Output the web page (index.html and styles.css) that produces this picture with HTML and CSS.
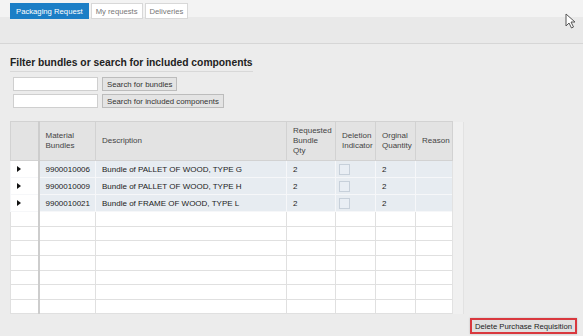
FILE: index.html
```html
<html>
<head>
    <link rel="stylesheet" href="styles.css">
</head>
<body>
    <div class="topbar">
        <div class="tabs">
            <span class="tab active">Packaging Request</span>
            <span class="tab">My requests</span>
            <span class="tab">Deliveries</span>
        </div>
    </div>
    <div class="band"></div>

    <div class="content">
        <h2><span>Filter bundles or search for included components</span></h2>

        <div class="search">
            <div class="search-row">
                <input type="text">
                <button>Search for bundles</button>
            </div>
            <div class="search-row">
                <input type="text">
                <button>Search for included components</button>
            </div>
        </div>

        <table class="grid">
            <colgroup>
                <col class="c-sel">
                <col class="c-mat">
                <col class="c-desc">
                <col class="c-qty">
                <col class="c-del">
                <col class="c-org">
                <col class="c-rsn">
                <col class="c-scroll">
            </colgroup>
            <tr class="head">
                <td class="sel"></td>
                <td>Material<br>Bundles</td>
                <td>Description</td>
                <td>Requested<br>Bundle<br>Qty</td>
                <td>Deletion<br>Indicator</td>
                <td>Orginal<br>Quantity</td>
                <td>Reason</td>
                <td class="scroll" rowspan="11"></td>
            </tr>
            <tr class="data">
                <td class="sel"><span class="arrow"></span></td>
                <td>9900010006</td>
                <td>Bundle of PALLET OF WOOD, TYPE G</td>
                <td>2</td>
                <td><span class="check"></span></td>
                <td>2</td>
                <td></td>
            </tr>
            <tr class="data">
                <td class="sel"><span class="arrow"></span></td>
                <td>9900010009</td>
                <td>Bundle of PALLET OF WOOD, TYPE H</td>
                <td>2</td>
                <td><span class="check"></span></td>
                <td>2</td>
                <td></td>
            </tr>
            <tr class="data">
                <td class="sel"><span class="arrow"></span></td>
                <td>9900010021</td>
                <td>Bundle of FRAME OF WOOD, TYPE L</td>
                <td>2</td>
                <td><span class="check"></span></td>
                <td>2</td>
                <td></td>
            </tr>
            <tr class="empty"><td class="sel"></td><td></td><td></td><td></td><td></td><td></td><td></td></tr>
            <tr class="empty"><td class="sel"></td><td></td><td></td><td></td><td></td><td></td><td></td></tr>
            <tr class="empty"><td class="sel"></td><td></td><td></td><td></td><td></td><td></td><td></td></tr>
            <tr class="empty"><td class="sel"></td><td></td><td></td><td></td><td></td><td></td><td></td></tr>
            <tr class="empty"><td class="sel"></td><td></td><td></td><td></td><td></td><td></td><td></td></tr>
            <tr class="empty"><td class="sel"></td><td></td><td></td><td></td><td></td><td></td><td></td></tr>
            <tr class="empty"><td class="sel"></td><td></td><td></td><td></td><td></td><td></td><td></td></tr>
        </table>

        <div class="actions">
            <button class="delete">Delete Purchase Requisition</button>
        </div>
    </div>

    <!-- mouse pointer from the screenshot -->
    <svg class="cursor" width="12" height="16" viewBox="0 0 12 16">
        <path d="M1 1 L1 13 L4 10 L6.5 15 L8.5 14 L6 9 L10 9 Z" fill="#fff" stroke="#555" stroke-width="1" stroke-linejoin="round"/>
    </svg>
</body>
</html>
```

FILE: styles.css
```css
body {
    margin: 0;
    background: #ececec;
    font-family: 'Liberation Sans', Arial, sans-serif;
    font-size: 8px;
    color: #333;
    position: relative;
    width: 583px;
    height: 336px;
    overflow: hidden;
}

.topbar {
    height: 17px;
    background: #f3f3f3;
    padding: 3px 0 0 10px;
    box-sizing: border-box;
}

.tabs {
    display: flex;
    gap: 2px;
    position: relative;
    z-index: 1;
}

.tab {
    height: 16px;
    line-height: 16px;
    padding: 0 4px;
    background: #fff;
    color: #777;
    border: 1px solid #d8d8d8;
    box-sizing: border-box;
    white-space: nowrap;
    font-size: 7.7px;
}

.tab.active {
    background: #1b7ec6;
    border-color: #1b7ec6;
    color: #fff;
    padding: 0 5px;
}

.band {
    height: 26px;
    background: #e9e9e9;
    border-bottom: 1px solid #d6d6d6;
}

.content {
    padding: 0 6px 0 10px;
}

h2 {
    margin: 13px 0 0 0;
    font-size: 10.3px;
    font-weight: bold;
    color: #222;
}

h2 span {
    display: inline-block;
    padding-bottom: 3px;
    border-bottom: 1px solid #d8d8d8;
}

.search {
    display: flex;
    flex-direction: column;
    gap: 3px;
    margin: 5px 0 0 3px;
}

.search-row {
    display: flex;
    gap: 4px;
}

.search input {
    width: 85px;
    height: 14px;
    margin: 0;
    padding: 0;
    border: 1px solid #cfcfcf;
    background: #fff;
    box-sizing: border-box;
}

.search button {
    height: 14px;
    margin: 0;
    padding: 0 4px;
    font-family: 'Liberation Sans', Arial, sans-serif;
    font-size: 7.8px;
    color: #333;
    background: #e4e4e4;
    border: 1px solid #bcbcbc;
    box-sizing: border-box;
}

.grid {
    margin-top: 13px;
    border-collapse: collapse;
    table-layout: fixed;
    width: 453px;
    font-family: 'Liberation Sans', Arial, sans-serif;
    font-size: 8px;
}

.c-sel { width: 28px; }
.c-mat { width: 57px; }
.c-desc { width: 191px; }
.c-qty { width: 49px; }
.c-del { width: 40px; }
.c-org { width: 40px; }
.c-rsn { width: 37px; }
.c-scroll { width: 11px; }

.grid td {
    padding: 0 0 0 6px;
    border: 1px solid #dcdcdc;
    vertical-align: middle;
    white-space: nowrap;
    overflow: hidden;
}

.grid .sel {
    padding: 0 0 0 6px;
    border-right: 2px solid #cdcdcd;
    background: #fff;
}

.grid .scroll {
    padding: 0;
    background: #f0f0f0;
    border: none;
    border-left: 1px solid #e2e2e2;
    border-right: 1px solid #e2e2e2;
}

.head td {
    height: 39px;
    background: #e3e3e3;
    border-color: #d2d2d2;
    line-height: 10px;
    color: #444;
}

.head .sel {
    background: #e3e3e3;
}

.data td {
    height: 17.1px;
    background: #e7ecf1;
    border-color: #f6f7f9;
    color: #222;
}

.data td.sel {
    background: #fff;
    border-right-color: #cdcdcd;
}

.arrow {
    display: inline-block;
    width: 0;
    height: 0;
    border-top: 3px solid transparent;
    border-bottom: 3px solid transparent;
    border-left: 4px solid #111;
}

.check {
    display: inline-block;
    width: 9px;
    height: 9px;
    margin-left: -3px;
    border: 1px solid #c7d0da;
    background: #e9eef4;
    vertical-align: middle;
}

.empty td {
    height: 14.6px;
    padding: 0;
    background: #fff;
    border-color: #e0e0e0;
}

.actions {
    display: flex;
    justify-content: flex-end;
    margin-top: 4px;
}

.delete {
    height: 12px;
    padding: 0 3px;
    margin: 0;
    font-family: 'Liberation Sans', Arial, sans-serif;
    font-size: 7.7px;
    color: #222;
    background: #e0e0e0;
    border: 2px solid #d9383e;
    box-sizing: content-box;
    box-shadow: 0 0 2px rgba(0,0,0,0.2);
}

.cursor {
    position: absolute;
    left: 565px;
    top: 13px;
}
```
